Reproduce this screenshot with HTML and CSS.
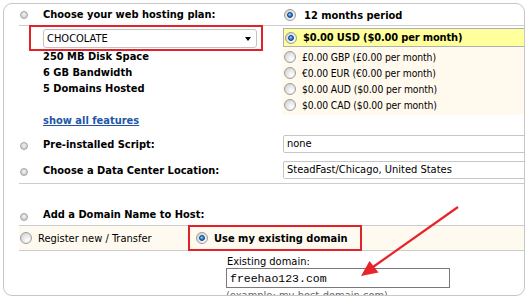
FILE: index.html
```html
<!DOCTYPE html>
<html>
<head>
<meta charset="utf-8">
<link rel="stylesheet" href="styles.css">
</head>
<body>
<div class="frame">
  <div class="row r1">
    <div class="lab"><span class="step"></span><b>Choose your web hosting plan:</b></div>
    <div class="opt"><span class="radio on"></span><b>12 months period</b></div>
  </div>

  <div class="row r2">
    <div class="left">
      <div class="hl">
        <div class="select"><span>CHOCOLATE</span><span class="caret"></span></div>
      </div>
      <ul class="feat">
        <li>250 MB Disk Space</li>
        <li>6 GB Bandwidth</li>
        <li>5 Domains Hosted</li>
      </ul>
      <a class="more" href="#">show all features</a>
    </div>
    <div class="right">
      <div class="cur chosen"><span class="radio on"></span><b>$0.00 USD ($0.00 per month)</b></div>
      <div class="curlist">
        <div class="cur"><span class="radio"></span><span>£0.00 GBP (£0.00 per month)</span></div>
        <div class="cur"><span class="radio"></span><span>€0.00 EUR (€0.00 per month)</span></div>
        <div class="cur"><span class="radio"></span><span>$0.00 AUD ($0.00 per month)</span></div>
        <div class="cur"><span class="radio"></span><span>$0.00 CAD ($0.00 per month)</span></div>
      </div>
    </div>
  </div>

  <div class="row r34">
    <div class="lab"><span class="step low"></span><b>Pre-installed Script:</b></div>
    <div class="field">none</div>
    <div class="lab"><span class="step low"></span><b>Choose a Data Center Location:</b></div>
    <div class="field">SteadFast/Chicago, United States</div>
  </div>

  <div class="row r5">
    <div class="lab"><span class="step low"></span><b>Add a Domain Name to Host:</b></div>
  </div>

  <div class="row r6">
    <div class="choice"><span class="radio"></span><span>Register new / Transfer</span></div>
    <div class="choice boxed"><span class="radio on"></span><b>Use my existing domain</b></div>
  </div>

  <div class="row r7">
    <div class="domain">
      <div class="dlab">Existing domain:</div>
      <div class="dinput">freehao123.com</div>
      <div class="dhint">(example: my-host-domain.com)</div>
    </div>
  </div>
</div>

<svg class="arrow" width="530" height="300" viewBox="0 0 530 300">
  <line x1="458" y1="207" x2="373" y2="267" stroke="#e8232b" stroke-width="2.2"/>
  <polygon points="361,276 369.5,261 378.5,272.5" fill="#e8232b"/>
</svg>
</body>
</html>
```
FILE: styles.css
```css
html, body {
  margin: 0;
  padding: 0;
  background: #fff;
}

body {
  position: relative;
  width: 530px;
  height: 300px;
  overflow: hidden;
  font-family: "DejaVu Sans Condensed", "DejaVu Sans", sans-serif;
  font-size: 11px;
  color: #000;
}

b { font-weight: bold; }

.frame {
  margin: 3px 5px 0 3px;
  height: 293px;
  box-sizing: border-box;
  border: 1px solid #c6c6c6;
  border-radius: 9px;
  overflow: hidden;
}

.row {
  margin-left: 15px;
  display: grid;
  grid-template-columns: 263px 1fr;
}

/* step indicator on the left */
.lab {
  display: flex;
  align-items: center;
}

.step {
  flex: none;
  width: 8px;
  height: 8px;
  box-sizing: border-box;
  margin: 0 15px 0 1px;
  border-radius: 50%;
  border: 1px solid #a3a3a3;
  background: radial-gradient(circle at 50% 40%, #f2f2f2 0, #cfcfcf 70%);
}

.step.low { margin-top: 4px; }

/* radios */
.radio {
  flex: none;
  position: relative;
  width: 12px;
  height: 12px;
  box-sizing: border-box;
  border-radius: 50%;
  border: 1px solid #9c9c9c;
  background: radial-gradient(circle at 65% 70%, #ffffff 0, #e8e8e8 45%, #c9c9c9 100%);
  margin-right: 6px;
}

.radio.on::after {
  content: "";
  position: absolute;
  left: 2px;
  top: 2px;
  width: 6px;
  height: 6px;
  box-sizing: border-box;
  border-radius: 50%;
  border: 1px solid #0d3d78;
  background: radial-gradient(circle at 40% 35%, #9fd2ff 0, #2a84d8 50%, #125aa8 100%);
}

/* row 1 */
.r1 {
  height: 21px;
  border-bottom: 1px solid #cccccc;
  align-items: center;
}

.opt {
  display: flex;
  align-items: center;
  padding-left: 2px;
  margin-top: 1px;
}

.opt b { margin-left: 2px; }

/* row 2 */
.r2 {
  align-items: start;
}

.hl {
  margin: -1px 0 0 10px;
  width: 234px;
  height: 26px;
  box-sizing: border-box;
  border: 2px solid #e3212a;
  padding: 2px 4px 0 12px;
}

.select {
  height: 19px;
  box-sizing: border-box;
  border: 1px solid #c3c3c3;
  border-radius: 3px;
  background: #fff;
  padding: 0 5px 0 3px;
  display: flex;
  align-items: center;
  justify-content: space-between;
  line-height: 17px;
}

.caret {
  width: 0;
  height: 0;
  border-left: 3.5px solid transparent;
  border-right: 3.5px solid transparent;
  border-top: 4px solid #000;
  margin-top: 1px;
}

.feat {
  list-style: none;
  margin: -2px 0 0 0;
  padding: 0 0 0 24px;
  font-weight: bold;
  line-height: 16px;
}

.more {
  display: block;
  margin: 16px 0 0 24px;
  width: max-content;
  font-weight: bold;
  line-height: 16px;
  color: #1f56a8;
  text-decoration: underline;
}

.right {
  padding-top: 2px;
}

.cur {
  display: flex;
  align-items: center;
  height: 16px;
  padding-left: 2px;
}

.cur span:last-child {
  font-size: 10.3px;
  letter-spacing: -0.1px;
}

.cur.chosen {
  height: 19px;
  box-sizing: border-box;
  margin-left: 1px;
  padding-left: 1px;
  border: 1px solid #b0b0b0;
  border-right: none;
  background: #ffff9b;
}

.cur.chosen b { letter-spacing: -0.15px; }

.curlist {
  background: #fff9ee;
  padding: 2px 0;
}

/* rows 3-4 */
.r34 {
  padding: 6px 0 4px;
  row-gap: 8px;
  border-bottom: 1px solid #cccccc;
}

.field {
  height: 18px;
  box-sizing: border-box;
  margin: 0 -20px 0 1px;
  border: 1px solid #c6c6c6;
  border-radius: 2px;
  padding-left: 3px;
  line-height: 16px;
  background: #fff;
}

/* row 5 */
.r5 {
  padding: 23px 0 2px;
  line-height: 16px;
  border-bottom: 1px solid #cccccc;
}

/* row 6 */
.r6 {
  display: flex;
  height: 24px;
  background: #fffaef;
  border-bottom: 1px solid #cccccc;
}

.choice {
  display: flex;
  align-items: center;
}

.choice:first-child {
  width: 169px;
  padding-left: 1px;
  box-sizing: border-box;
}

.boxed {
  margin: -1px 0;
  height: 26px;
  box-sizing: border-box;
  border: 2px solid #e3212a;
  padding: 0 12px 0 6px;
}

/* row 7 */
.r7 {
  display: block;
}

.domain {
  padding: 4px 0 0 207px;
}

.dlab {
  line-height: 14px;
  padding-left: 1px;
}

.dinput {
  margin-top: -1px;
  width: 224px;
  height: 20px;
  box-sizing: border-box;
  border: 1px solid #7a7a7a;
  padding-left: 3px;
  font-family: "Liberation Mono", monospace;
  font-size: 11.5px;
  line-height: 19px;
}

.dhint {
  color: #666;
  line-height: 14px;
  margin-top: 1px;
}

.arrow {
  position: absolute;
  left: 0;
  top: 0;
  pointer-events: none;
}
```
